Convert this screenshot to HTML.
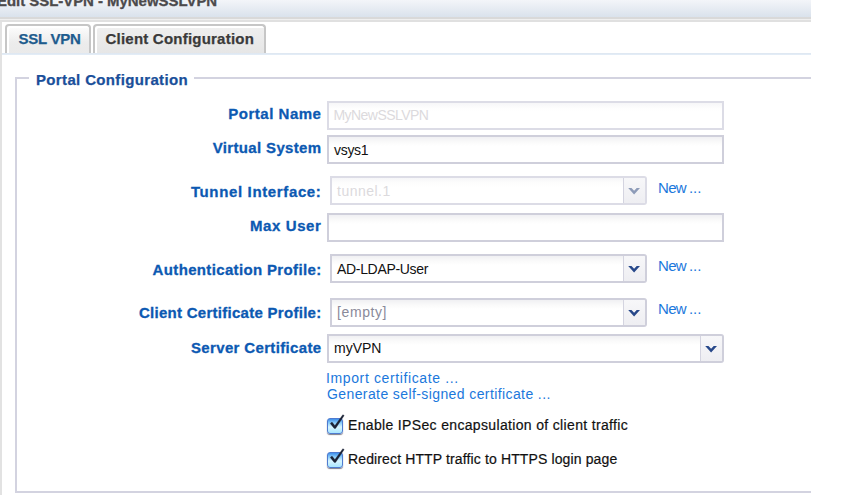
<!DOCTYPE html>
<html><head><meta charset="utf-8">
<style>
*{margin:0;padding:0;box-sizing:border-box}
html,body{width:861px;height:495px;overflow:hidden;background:#fff;font-family:"Liberation Sans",sans-serif}
.abs{position:absolute}
#title{left:0;top:0;width:811px;height:17px;background:linear-gradient(#f3f5f9,#dae2ec)}
#title span{position:absolute;left:-3px;top:-8px;font:bold 15px "Liberation Sans",sans-serif;color:#4c4a4c;letter-spacing:-0.05px;-webkit-text-stroke:0.3px #4c4a4c;white-space:nowrap}
#tline{left:0;top:17px;width:811px;height:5px;background:linear-gradient(#d9d9d9 0,#d9d9d9 1.8px,#efefef 1.8px,#efefef 3.3px,#e0e0e0 3.3px,#e0e0e0 5px)}
#lborder{left:0;top:22px;width:2px;height:473px;background:#e2e2e2}
.tab{top:24px;height:29.5px;border:2px solid #c6c6c6;border-bottom:none;border-radius:4px 4px 0 0;box-shadow:inset 2px 2px 0 #fff;font:bold 15px "Liberation Sans",sans-serif;white-space:nowrap}
#tab1{left:4.5px;width:86px;background:linear-gradient(#fdfdfd,#ececec 60%,#eaeaea);color:#1e5c8e}
#tab2{left:93px;width:173px;background:linear-gradient(#efefef,#e6e6e6);color:#3a3a3a}
.tab span{position:absolute;top:4px;-webkit-text-stroke:0.25px currentColor}
#tstrip{left:2px;top:52.5px;width:809px;height:2.5px;background:linear-gradient(#dde6f0,#e4eef8)}
#fs{left:15px;top:76.5px;width:810px;height:416.5px;border:2px solid #d3d3e0;border-right:none}
#fsclip{left:0;top:0;width:811px;height:495px;overflow:hidden}
#legend{left:29px;top:71px;padding:0 6px 0 7px;background:#fff;font:bold 15px "Liberation Sans",sans-serif;color:#1a4f9a;letter-spacing:0.35px;-webkit-text-stroke:0.25px #1a4f9a;white-space:nowrap}
.lbl{right:489.5px;font:bold 15px "Liberation Sans",sans-serif;color:#0c59b2;letter-spacing:0.35px;-webkit-text-stroke:0.3px #0c59b2;white-space:nowrap;text-align:right}
.fld{border:2px solid #cfcfdb;background:linear-gradient(#f0f0f3 0,#fafafa 5px,#fff 9px);font:14px "Liberation Sans",sans-serif;color:#111;white-space:nowrap;overflow:hidden}
.fld.dis{border-color:#dcdce6;background:linear-gradient(#f6f6f8 0,#fdfdfd 5px,#fff 9px);color:#dcdadd}
.fld span{position:absolute;left:5px;top:5px}
.dd{position:absolute;top:0;right:0;width:22px;height:100%;border-left:1.5px solid #d4d4e0;background:linear-gradient(#f7f7f9,#eeeef2)}
.dd svg{position:absolute;left:4px;top:8.5px}
.link{font:14px "Liberation Sans",sans-serif;color:#1b78dc;white-space:nowrap;letter-spacing:0.2px}
.new{font-size:15px;letter-spacing:0;word-spacing:-1.2px}
.cbt{font:14px "Liberation Sans",sans-serif;color:#111;white-space:nowrap;-webkit-text-stroke:0.2px #111}
.cb{width:16px;height:16px;border:1px solid #4f7bd0;border-radius:3px;background:linear-gradient(#3f8fea 0%,#8fd0fb 30%,#d8f5ff 58%,#a8e6ff 100%);box-shadow:0 1px 1px rgba(40,40,60,.6)}
</style></head><body>
<div id="fsclip" class="abs">
<div id="title" class="abs"><span>Edit SSL-VPN - MyNewSSLVPN</span></div>
<div id="tline" class="abs"></div>
<div id="lborder" class="abs"></div>
<div id="tab1" class="abs tab"><span style="left:12px;letter-spacing:-0.25px">SSL VPN</span></div>
<div id="tab2" class="abs tab"><span style="left:10.5px;letter-spacing:0.22px">Client Configuration</span></div>
<div id="tstrip" class="abs"></div>
<div id="fs" class="abs"></div>
<div id="legend" class="abs">Portal Configuration</div>

<div class="abs lbl" style="top:105px;letter-spacing:0.52px">Portal Name</div>
<div class="abs fld dis" style="left:327px;top:101px;width:397px;height:29px"><span style="letter-spacing:-0.55px;top:3.8px;left:4.5px">MyNewSSLVPN</span></div>

<div class="abs lbl" style="top:139px">Virtual System</div>
<div class="abs fld" style="left:327px;top:135px;width:397px;height:29px"><span style="letter-spacing:-0.3px">vsys1</span></div>

<div class="abs lbl" style="top:183px;letter-spacing:0.64px">Tunnel Interface:</div>
<div class="abs fld dis" style="left:330px;top:176px;width:317px;height:28.5px;border-radius:0 3px 3px 0"><span style="letter-spacing:0.49px">tunnel.1</span><div class="dd"><svg width="13" height="9" viewBox="0 0 13 9"><path d="M0.2 0.9 L3.5 0.9 L6.1 3.7 L8.7 0.9 L12 0.9 L6.1 7.4 Z" fill="#8d9bb8"/></svg></div></div>
<div class="abs link new" style="left:658px;top:179px"><span style="letter-spacing:-0.7px">New</span> ...</div>

<div class="abs lbl" style="top:217px;letter-spacing:0.6px">Max User</div>
<div class="abs fld" style="left:327px;top:213px;width:397px;height:29px"></div>

<div class="abs lbl" style="top:261px">Authentication Profile:</div>
<div class="abs fld" style="left:330px;top:254px;width:317px;height:28.5px;border-radius:0 3px 3px 0"><span style="letter-spacing:-0.32px">AD-LDAP-User</span><div class="dd"><svg width="13" height="9" viewBox="0 0 13 9"><path d="M0.2 0.9 L3.5 0.9 L6.1 3.7 L8.7 0.9 L12 0.9 L6.1 7.4 Z" fill="#27488a"/></svg></div></div>
<div class="abs link new" style="left:658px;top:257px"><span style="letter-spacing:-0.7px">New</span> ...</div>

<div class="abs lbl" style="top:304px;letter-spacing:0.28px">Client Certificate Profile:</div>
<div class="abs fld" style="left:330px;top:298px;width:317px;height:28.5px;border-radius:0 3px 3px 0;color:#8a8a9a"><span style="letter-spacing:0.6px;top:4px">[empty]</span><div class="dd"><svg width="13" height="9" viewBox="0 0 13 9"><path d="M0.2 0.9 L3.5 0.9 L6.1 3.7 L8.7 0.9 L12 0.9 L6.1 7.4 Z" fill="#27488a"/></svg></div></div>
<div class="abs link new" style="left:658px;top:300px"><span style="letter-spacing:-0.7px">New</span> ...</div>

<div class="abs lbl" style="top:339px">Server Certificate</div>
<div class="abs fld" style="left:327px;top:334px;width:397px;height:29px;border-radius:0 3px 3px 0"><span style="top:4px">myVPN</span><div class="dd"><svg width="13" height="9" viewBox="0 0 13 9"><path d="M0.2 0.9 L3.5 0.9 L6.1 3.7 L8.7 0.9 L12 0.9 L6.1 7.4 Z" fill="#27488a"/></svg></div></div>

<div class="abs link" style="left:326px;top:370.3px;letter-spacing:0.62px">Import certificate ...</div>
<div class="abs link" style="left:327px;top:386.4px;letter-spacing:0.4px">Generate self-signed certificate ...</div>

<div class="abs cb" style="left:327px;top:418px"></div>
<svg class="abs" style="left:329px;top:413px" width="18" height="20" viewBox="0 0 18 20"><path d="M1.2 10.4 L3.0 9.1 L5.9 12.6 L13.8 1.7 L15.2 2.5 L6.6 15.4 L5.2 15.4 Z" fill="#1c2336" stroke="#1c2336" stroke-width="0.3" stroke-linejoin="round"/></svg>
<div class="abs cbt" style="left:348px;top:416.5px;letter-spacing:0.34px">Enable IPSec encapsulation of client traffic</div>

<div class="abs cb" style="left:327px;top:452px"></div>
<svg class="abs" style="left:329px;top:447px" width="18" height="20" viewBox="0 0 18 20"><path d="M1.2 10.4 L3.0 9.1 L5.9 12.6 L13.8 1.7 L15.2 2.5 L6.6 15.4 L5.2 15.4 Z" fill="#1c2336" stroke="#1c2336" stroke-width="0.3" stroke-linejoin="round"/></svg>
<div class="abs cbt" style="left:348px;top:450.5px;letter-spacing:0.13px">Redirect HTTP traffic to HTTPS login page</div>
</div>
</body></html>
